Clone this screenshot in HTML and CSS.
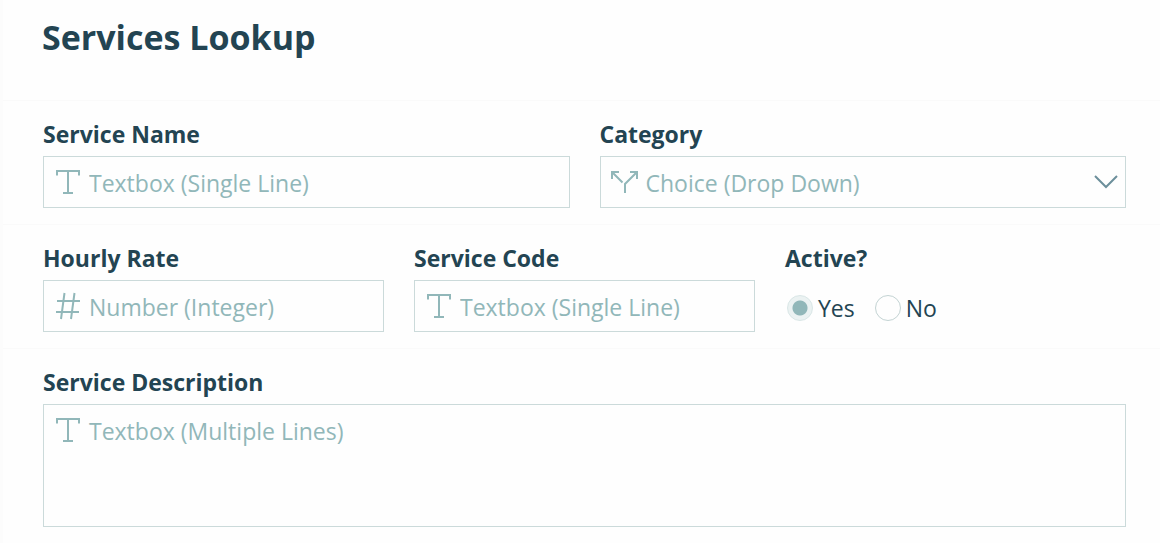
FILE: index.html
```html
<!doctype html>
<html lang="en">
<head>
	<meta charset="UTF-8">
	<meta name="viewport" content="width=device-width, initial-scale=1">
	<title>Services Lookup</title>
	<link rel="stylesheet" href="styles.css">
</head>
<body>
	<!-- shared icons -->
	<svg class="defs" aria-hidden="true">
		<symbol id="icon-text" viewBox="0 0 24 24">
			<path d="M1 5.500V1h22v4.500M12 1v22M7 23h10"/>
		</symbol>
	</svg>
	<form class="form">
		<header class="title">
			<h1>Services Lookup</h1>
		</header>
		<div class="row two">
			<div class="field">
				<label for="name">Service Name</label>
				<div class="control">
					<svg class="icon"><use href="#icon-text"/></svg>
					<input type="text" id="name" placeholder="Textbox (Single Line)">
				</div>
			</div>
			<div class="field">
				<label for="category">Category</label>
				<div class="control">
					<svg class="icon branch" viewBox="0 0 28 24">
						<path d="M1 9V2h7M1 2l10.500 10.500M19 2h7v7M26 2L14 14v9"/>
					</svg>
					<select id="category">
						<option>Choice (Drop Down)</option>
					</select>
					<svg class="arrow" viewBox="0 0 24 14">
						<path d="M1 1l11 11L23 1"/>
					</svg>
				</div>
			</div>
		</div>
		<div class="row three">
			<div class="field">
				<label for="rate">Hourly Rate</label>
				<div class="control">
					<svg class="icon" viewBox="0 0 24 24">
						<path d="M8.500 -1L5 25M18.500 -1L15 25M1 7h23M0 18h23"/>
					</svg>
					<input type="text" id="rate" inputmode="numeric" placeholder="Number (Integer)">
				</div>
			</div>
			<div class="field">
				<label for="code">Service Code</label>
				<div class="control">
					<svg class="icon"><use href="#icon-text"/></svg>
					<input type="text" id="code" placeholder="Textbox (Single Line)">
				</div>
			</div>
			<fieldset class="field">
				<legend>Active?</legend>
				<div class="radios">
					<label><input type="radio" name="active" value="yes" checked>Yes</label>
					<label><input type="radio" name="active" value="no">No</label>
				</div>
			</fieldset>
		</div>
		<div class="row">
			<div class="field">
				<label for="description">Service Description</label>
				<div class="control">
					<svg class="icon"><use href="#icon-text"/></svg>
					<textarea id="description" placeholder="Textbox (Multiple Lines)"></textarea>
				</div>
			</div>
		</div>
	</form>
</body>
</html>
```
FILE: styles.css
```css
*{
	box-sizing: border-box;
}
body{
	margin: 0;
	background: #fefefe;
	color: #234452;
	font-family: "Open Sans", "Noto Sans", sans-serif;
	font-size: 23px;
	line-height: 32px;
}
.defs{
	position: absolute;
	width: 0;
	height: 0;
}
.form{
	border-left: 3px solid #fcfcfc;
}
.title{
	padding: 13px 34px 39px 39px;
}
h1{
	margin: 0;
	font-size: 34px;
	font-weight: 700;
	line-height: 48px;
}
.row{
	display: grid;
	gap: 30px;
	padding: 17px 34px 16px 40px;
	border-top: 1px solid #fafafa;
}
.two{
	grid-template-columns: 1fr 1fr;
}
.three{
	grid-template-columns: 1fr 1fr 1fr;
}
.field{
	min-width: 0;
	margin: 0;
	padding: 0;
	border: 0;
}
.field > label,
legend{
	display: block;
	margin-bottom: 6px;
	padding: 0;
	font-weight: 700;
}
.control{
	position: relative;
}
.icon,
.arrow{
	position: absolute;
	fill: none;
	stroke: #91b7b9;
	stroke-width: 2;
	pointer-events: none;
}
.icon{
	top: 14px;
	left: 13px;
	width: 24px;
	height: 24px;
	overflow: visible;
}
.branch{
	left: 11px;
	width: 28px;
}
.arrow{
	top: 19px;
	right: 8px;
	width: 24px;
	height: 14px;
	stroke: #6c8f9b;
}
input[type="text"],
select,
textarea{
	display: block;
	width: 100%;
	height: 52px;
	margin: 0;
	padding: 2px 10px 0 45px;
	border: 1px solid #cbdada;
	border-radius: 0;
	background: transparent;
	color: #91b7b9;
	font: inherit;
}
select{
	appearance: none;
}
textarea{
	height: 123px;
	padding-top: 10px;
	resize: none;
}
::placeholder{
	color: #91b7b9;
	opacity: 1;
}
.radios{
	display: flex;
	gap: 20px;
	padding: 12px 2px 8px;
}
.radios label{
	display: flex;
	align-items: center;
	gap: 5px;
}
input[type="radio"]{
	appearance: none;
	width: 26px;
	height: 26px;
	margin: 0;
	border: 1px solid #c3d3d3;
	border-radius: 50%;
}
input[type="radio"]:checked{
	border-color: #d9e6e6;
	background: radial-gradient(circle, #91b7b9 7px, #ebf2f2 8px);
}
```
